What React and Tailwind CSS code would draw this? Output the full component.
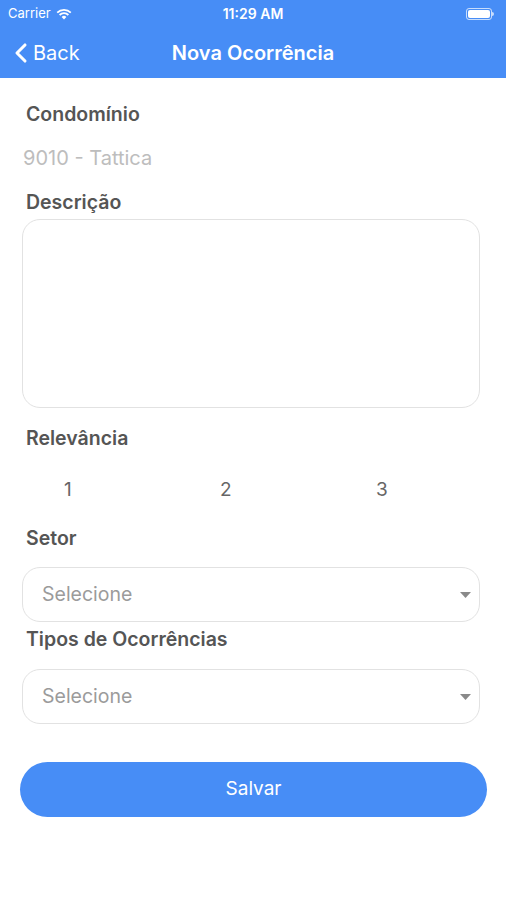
import { ChevronLeft } from 'lucide-react'

const FONT = { fontFamily: 'Inter, "Noto Sans", sans-serif' }

function Caret() {
  return (
    <svg width="11" height="6" viewBox="0 0 11 6" className="text-[#8a8a8a]">
      <path d="M0 0h11L5.5 6z" fill="currentColor" />
    </svg>
  )
}

function SelectBox({ label }) {
  return (
    <div className="ml-[22px] mr-[26px] h-[55px] rounded-[18px] border border-[#e2e2e2] flex items-center justify-between pl-[19px] pr-[8px]">
      <span className="text-[19.5px] leading-[27px] text-[#9b9b9b]">{label}</span>
      <Caret />
    </div>
  )
}

function Label({ children, className = '' }) {
  return (
    <div className={`px-[26px] text-[19.5px] leading-[27px] font-semibold text-[#555] ${className}`}>{children}</div>
  )
}

export default function App() {
  return (
    <div className="w-[506px] h-[900px] bg-white overflow-hidden" style={FONT}>
      <header className="bg-[#478df6] h-[78px] text-white">
        <div className="h-[27px] flex items-center justify-between px-[8px] relative">
          <div className="flex items-center gap-[5px] text-[13px]">
            <span>Carrier</span>
            <svg width="16" height="12" viewBox="0 0 16 12">
              <path d="M8 11.5 5.6 9a3.4 3.4 0 0 1 4.8 0z" fill="white" />
              <path d="M3.6 7a6.3 6.3 0 0 1 8.8 0" stroke="white" strokeWidth="1.8" fill="none" />
              <path d="M1.2 4.6a9.7 9.7 0 0 1 13.6 0" stroke="white" strokeWidth="1.8" fill="none" />
            </svg>
          </div>
          <span className="absolute left-1/2 -translate-x-1/2 text-[14px] font-semibold">11:29 AM</span>
          <div className="flex items-center mr-[4px]">
            <div className="w-[26px] h-[12px] rounded-[3px] border border-white/70 p-[1px]">
              <div className="w-full h-full bg-white rounded-[2px]" />
            </div>
            <div className="w-[2px] h-[4px] bg-white/70 rounded-r" />
          </div>
        </div>
        <div className="h-[51px] flex items-center relative">
          <div className="flex items-center pl-[5px]">
            <ChevronLeft size={32} strokeWidth={2.3} className="-mr-[4px]" />
            <span className="text-[20px]">Back</span>
          </div>
          <span className="absolute left-1/2 -translate-x-1/2 text-[20px] font-semibold">Nova Ocorrência</span>
        </div>
      </header>

      <Label className="mt-[23px]">Condomínio</Label>
      <div className="px-[23px] mt-[17px] text-[20px] leading-[27px] text-[#bdbdbd]">9010 - Tattica</div>
      <Label className="mt-[17px]">Descrição</Label>
      <div className="ml-[22px] mr-[26px] mt-[3px] h-[189px] rounded-[18px] border border-[#e2e2e2]" />

      <Label className="mt-[17px]">Relevância</Label>
      <div className="flex mt-[24px] pl-[64px] text-[19px] leading-[27px] text-[#666]">
        <span className="w-[156px] shrink-0">1</span>
        <span className="w-[156px] shrink-0">2</span>
        <span>3</span>
      </div>

      <Label className="mt-[22px]">Setor</Label>
      <div className="mt-[15px]">
        <SelectBox label="Selecione" />
      </div>
      <Label className="mt-[4px]">Tipos de Ocorrências</Label>
      <div className="mt-[16px]">
        <SelectBox label="Selecione" />
      </div>

      <div className="px-[20px] mt-[38px]">
        <button className="w-[467px] h-[55px] rounded-full bg-[#478df6] text-white text-[19px]">Salvar</button>
      </div>
    </div>
  )
}
